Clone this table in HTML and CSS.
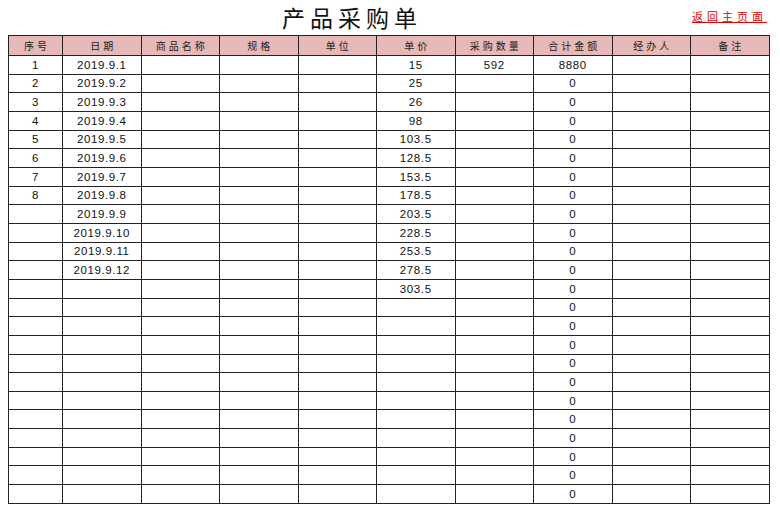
FILE: index.html
```html
<!DOCTYPE html>
<html lang="zh">
<head>
<meta charset="utf-8">
<title>产品采购单</title>
<link rel="stylesheet" href="styles.css">
</head>
<body>
<div class="page">
  <div class="topbar">
    <h1 class="title">产品采购单</h1>
    <a class="back" href="#">返回主页面</a>
  </div>
  <table class="sheet">
    <colgroup>
      <col class="c-no"><col class="c-w"><col class="c-w"><col class="c-w"><col class="c-w">
      <col class="c-w"><col class="c-w"><col class="c-w"><col class="c-w"><col class="c-w">
    </colgroup>
    <thead>
      <tr><th>序号</th><th>日期</th><th>商品名称</th><th>规格</th><th>单位</th><th>单价</th><th>采购数量</th><th>合计金额</th><th>经办人</th><th>备注</th></tr>
    </thead>
    <tbody>
      <tr><td>1</td><td>2019.9.1</td><td></td><td></td><td></td><td>15</td><td>592</td><td>8880</td><td></td><td></td></tr>
      <tr><td>2</td><td>2019.9.2</td><td></td><td></td><td></td><td>25</td><td></td><td>0</td><td></td><td></td></tr>
      <tr><td>3</td><td>2019.9.3</td><td></td><td></td><td></td><td>26</td><td></td><td>0</td><td></td><td></td></tr>
      <tr><td>4</td><td>2019.9.4</td><td></td><td></td><td></td><td>98</td><td></td><td>0</td><td></td><td></td></tr>
      <tr><td>5</td><td>2019.9.5</td><td></td><td></td><td></td><td>103.5</td><td></td><td>0</td><td></td><td></td></tr>
      <tr><td>6</td><td>2019.9.6</td><td></td><td></td><td></td><td>128.5</td><td></td><td>0</td><td></td><td></td></tr>
      <tr><td>7</td><td>2019.9.7</td><td></td><td></td><td></td><td>153.5</td><td></td><td>0</td><td></td><td></td></tr>
      <tr><td>8</td><td>2019.9.8</td><td></td><td></td><td></td><td>178.5</td><td></td><td>0</td><td></td><td></td></tr>
      <tr><td></td><td>2019.9.9</td><td></td><td></td><td></td><td>203.5</td><td></td><td>0</td><td></td><td></td></tr>
      <tr><td></td><td>2019.9.10</td><td></td><td></td><td></td><td>228.5</td><td></td><td>0</td><td></td><td></td></tr>
      <tr><td></td><td>2019.9.11</td><td></td><td></td><td></td><td>253.5</td><td></td><td>0</td><td></td><td></td></tr>
      <tr><td></td><td>2019.9.12</td><td></td><td></td><td></td><td>278.5</td><td></td><td>0</td><td></td><td></td></tr>
      <tr><td></td><td></td><td></td><td></td><td></td><td>303.5</td><td></td><td>0</td><td></td><td></td></tr>
      <tr><td></td><td></td><td></td><td></td><td></td><td></td><td></td><td>0</td><td></td><td></td></tr>
      <tr><td></td><td></td><td></td><td></td><td></td><td></td><td></td><td>0</td><td></td><td></td></tr>
      <tr><td></td><td></td><td></td><td></td><td></td><td></td><td></td><td>0</td><td></td><td></td></tr>
      <tr><td></td><td></td><td></td><td></td><td></td><td></td><td></td><td>0</td><td></td><td></td></tr>
      <tr><td></td><td></td><td></td><td></td><td></td><td></td><td></td><td>0</td><td></td><td></td></tr>
      <tr><td></td><td></td><td></td><td></td><td></td><td></td><td></td><td>0</td><td></td><td></td></tr>
      <tr><td></td><td></td><td></td><td></td><td></td><td></td><td></td><td>0</td><td></td><td></td></tr>
      <tr><td></td><td></td><td></td><td></td><td></td><td></td><td></td><td>0</td><td></td><td></td></tr>
      <tr><td></td><td></td><td></td><td></td><td></td><td></td><td></td><td>0</td><td></td><td></td></tr>
      <tr><td></td><td></td><td></td><td></td><td></td><td></td><td></td><td>0</td><td></td><td></td></tr>
      <tr><td></td><td></td><td></td><td></td><td></td><td></td><td></td><td>0</td><td></td><td></td></tr>
    </tbody>
  </table>
</div>
</body>
</html>
```
FILE: styles.css
```css
html, body {
  margin: 0;
  padding: 0;
  background: #fff;
}
body {
  font-family: "Liberation Sans", "Noto Sans CJK SC", sans-serif;
  color: #111;
}
.page {
  padding: 0 8px;
  width: 761px;
}
.topbar {
  display: grid;
  grid-template-columns: 683px 78px;
  height: 35px;
  align-items: center;
}
.title {
  margin: 0;
  font-family: "Noto Sans CJK SC", sans-serif;
  font-weight: 400;
  font-size: 23px;
  letter-spacing: 5px;
  text-indent: 5px;
  text-align: center;
  color: #111;
  line-height: 33px;
}
.back {
  justify-self: end;
  align-self: start;
  margin-top: 9px;
  margin-right: 2px;
  font-family: "Noto Sans CJK SC", sans-serif;
  font-size: 11px;
  letter-spacing: 4px;
  color: #e00000;
  text-decoration: underline;
  line-height: 14px;
}
.sheet {
  border-collapse: collapse;
  table-layout: fixed;
  width: 761px;
}
.c-no { width: 54px; }
.c-w { width: 78.5px; }
.sheet th,
.sheet td {
  border: 1px solid #222;
  padding: 0;
  text-align: center;
  vertical-align: middle;
  overflow: hidden;
  white-space: nowrap;
}
.sheet th {
  background: #e6b8b7;
  height: 19px;
  font-family: "Noto Sans CJK SC", sans-serif;
  font-weight: 400;
  font-size: 10px;
  letter-spacing: 3px;
  text-indent: 3px;
  color: #222;
  line-height: 12px;
}
.sheet td {
  height: 17.67px;
  font-size: 11.5px;
  letter-spacing: 0.6px;
  line-height: 12px;
  color: #111;
}
```
